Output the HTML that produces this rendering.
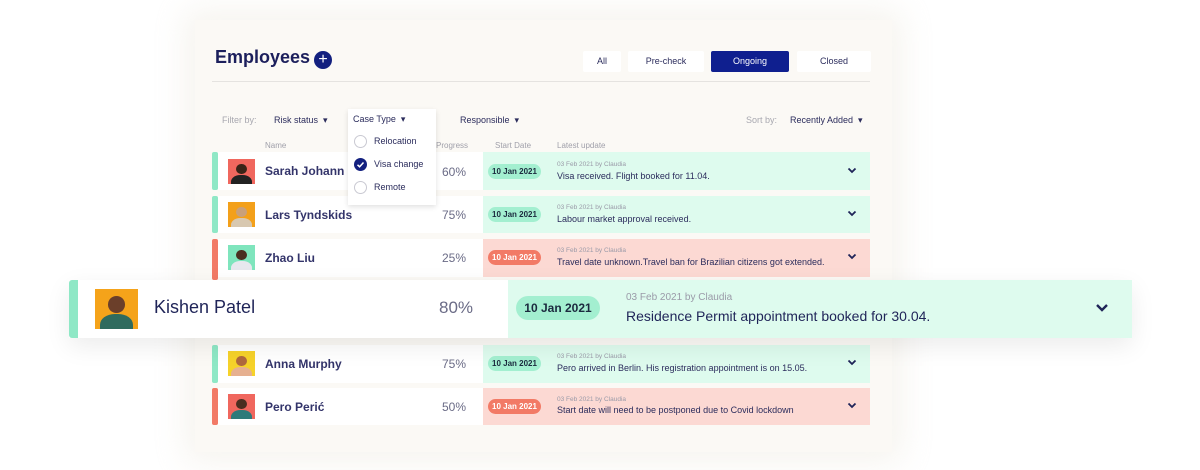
<!DOCTYPE html>
<html><head><meta charset="utf-8"><style>
*{margin:0;padding:0;box-sizing:border-box}
body{width:1200px;height:470px;background:#fff;font-family:"Liberation Sans",sans-serif;color:#2b2c5c;position:relative;overflow:hidden}
.a{position:absolute;white-space:nowrap}
.panel{left:195px;top:20px;width:697px;height:432px;background:#fbf9f5;box-shadow:0 0 30px 10px rgba(240,236,228,.6)}
.tab{top:51px;height:21px;font-size:9px;line-height:21px;text-align:center;background:#fff;border-radius:2px;color:#2b2c5c}
.bar{width:6px;border-radius:2px}
.g{background:#8fe8c6}.r{background:#f27a66}
.white{background:#fff}
.gbg{background:#defbee}.rbg{background:#fcd9d3}
.pill{font-size:8px;font-weight:bold;height:15px;line-height:15px;border-radius:8px;text-align:center;width:53px}
.pg{background:#a3efd0;color:#1b2a3e}.pr{background:#f27a66;color:#fff}
.nm{font-size:12px;font-weight:bold;color:#33346a}
.pc{font-size:12px;color:#6a6b86}
.meta{font-size:6.5px;color:#9a9aa8}
.txt{font-size:9px;color:#2b2c5c}
.av{width:27px;height:25px;overflow:hidden}
.hd{font-size:8px;color:#a0a0aa;top:141px}
.fl{font-size:9px;color:#2b2c5c;top:115px}
svg.ch{position:absolute}
.hd2{position:absolute;left:30%;top:18%;width:40%;height:42%;border-radius:50%;background:#6b3f2a}
.bd{position:absolute;left:12%;top:62%;width:76%;height:60%;border-radius:45% 45% 0 0;background:#2f6b5e}
</style></head><body>
<div class="a panel"></div>
<div class="a" style="left:215px;top:47px;font-size:18px;font-weight:bold;color:#1c1f5c">Employees</div>
<div class="a" style="left:314px;top:51px;width:18px;height:18px;border-radius:50%;background:#13207f;color:#fff;text-align:center;font-size:16px;line-height:18px">+</div>
<div class="a" style="left:212px;top:81px;width:658px;height:1px;background:#e5e3e0"></div>
<div class="a tab" style="left:583px;width:38px">All</div>
<div class="a tab" style="left:628px;width:76px">Pre-check</div>
<div class="a tab" style="left:711px;width:78px;background:#0f1f8f;color:#fff">Ongoing</div>
<div class="a tab" style="left:797px;width:74px">Closed</div>

<div class="a fl" style="left:222px;color:#a8a8b0">Filter by:</div>
<div class="a fl" style="left:274px">Risk status &nbsp;▾</div>
<div class="a fl" style="left:460px">Responsible &nbsp;▾</div>
<div class="a fl" style="left:746px;color:#a8a8b0">Sort by:</div>
<div class="a fl" style="left:790px">Recently Added &nbsp;▾</div>
<div class="a hd" style="left:265px">Name</div>
<div class="a hd" style="left:436px">Progress</div>
<div class="a hd" style="left:495px">Start Date</div>
<div class="a hd" style="left:557px">Latest update</div>

<!-- rows -->
<div class="a bar g" style="left:212px;top:152px;height:38px"></div>
<div class="a white" style="left:218px;top:152px;width:265px;height:38px"></div>
<div class="a gbg" style="left:483px;top:152px;width:387px;height:38px"></div>
<div class="a av" style="left:228px;top:159px;background:#f0675e"><div class="hd2" style="background:#3a2418"></div><div class="bd" style="background:#222"></div></div>
<div class="a nm" style="left:265px;top:164px">Sarah Johann</div>
<div class="a pc" style="left:442px;top:165px">60%</div>
<div class="a pill pg" style="left:488px;top:164px">10 Jan 2021</div>
<div class="a meta" style="left:557px;top:161px">03 Feb 2021 by Claudia</div>
<div class="a txt" style="left:557px;top:171px">Visa received. Flight booked for 11.04.</div>
<svg class="ch" style="left:847px;top:167px" width="10" height="7" viewBox="0 0 10 7"><path d="M1.5 1.5 5 5 8.5 1.5" fill="none" stroke="#1f2458" stroke-width="1.8"/></svg>

<div class="a bar g" style="left:212px;top:196px;height:37px"></div>
<div class="a white" style="left:218px;top:196px;width:265px;height:37px"></div>
<div class="a gbg" style="left:483px;top:196px;width:387px;height:37px"></div>
<div class="a av" style="left:228px;top:202px;background:#f3a01a"><div class="hd2" style="background:#c9a07a"></div><div class="bd" style="background:#d8c8b0"></div></div>
<div class="a nm" style="left:265px;top:208px">Lars Tyndskids</div>
<div class="a pc" style="left:442px;top:208px">75%</div>
<div class="a pill pg" style="left:488px;top:207px">10 Jan 2021</div>
<div class="a meta" style="left:557px;top:204px">03 Feb 2021 by Claudia</div>
<div class="a txt" style="left:557px;top:214px">Labour market approval received.</div>
<svg class="ch" style="left:847px;top:210px" width="10" height="7" viewBox="0 0 10 7"><path d="M1.5 1.5 5 5 8.5 1.5" fill="none" stroke="#1f2458" stroke-width="1.8"/></svg>

<div class="a bar r" style="left:212px;top:239px;height:41px"></div>
<div class="a white" style="left:218px;top:239px;width:265px;height:38px"></div>
<div class="a rbg" style="left:483px;top:239px;width:387px;height:38px"></div>
<div class="a av" style="left:228px;top:245px;background:#7fe5bd"><div class="hd2" style="background:#4a2e20"></div><div class="bd" style="background:#e8e8ee"></div></div>
<div class="a nm" style="left:265px;top:251px">Zhao Liu</div>
<div class="a pc" style="left:442px;top:251px">25%</div>
<div class="a pill pr" style="left:488px;top:250px">10 Jan 2021</div>
<div class="a meta" style="left:557px;top:247px">03 Feb 2021 by Claudia</div>
<div class="a txt" style="left:557px;top:257px">Travel date unknown.Travel ban for Brazilian citizens got extended.</div>
<svg class="ch" style="left:847px;top:253px" width="10" height="7" viewBox="0 0 10 7"><path d="M1.5 1.5 5 5 8.5 1.5" fill="none" stroke="#1f2458" stroke-width="1.8"/></svg>

<div class="a bar g" style="left:212px;top:345px;height:38px"></div>
<div class="a white" style="left:218px;top:345px;width:265px;height:38px"></div>
<div class="a gbg" style="left:483px;top:345px;width:387px;height:38px"></div>
<div class="a av" style="left:228px;top:351px;background:#f6d22a"><div class="hd2" style="background:#b0683e"></div><div class="bd" style="background:#e6b090"></div></div>
<div class="a nm" style="left:265px;top:357px">Anna Murphy</div>
<div class="a pc" style="left:442px;top:357px">75%</div>
<div class="a pill pg" style="left:488px;top:356px">10 Jan 2021</div>
<div class="a meta" style="left:557px;top:353px">03 Feb 2021 by Claudia</div>
<div class="a txt" style="left:557px;top:363px">Pero arrived in Berlin. His registration appointment is on 15.05.</div>
<svg class="ch" style="left:847px;top:359px" width="10" height="7" viewBox="0 0 10 7"><path d="M1.5 1.5 5 5 8.5 1.5" fill="none" stroke="#1f2458" stroke-width="1.8"/></svg>

<div class="a bar r" style="left:212px;top:388px;height:37px"></div>
<div class="a white" style="left:218px;top:388px;width:265px;height:37px"></div>
<div class="a rbg" style="left:483px;top:388px;width:387px;height:37px"></div>
<div class="a av" style="left:228px;top:394px;background:#f0675e"><div class="hd2" style="background:#4a2e20"></div><div class="bd" style="background:#2f7a7a"></div></div>
<div class="a nm" style="left:265px;top:400px">Pero Perić</div>
<div class="a pc" style="left:442px;top:400px">50%</div>
<div class="a pill pr" style="left:488px;top:399px">10 Jan 2021</div>
<div class="a meta" style="left:557px;top:396px">03 Feb 2021 by Claudia</div>
<div class="a txt" style="left:557px;top:405px">Start date will need to be postponed due to Covid lockdown</div>
<svg class="ch" style="left:847px;top:402px" width="10" height="7" viewBox="0 0 10 7"><path d="M1.5 1.5 5 5 8.5 1.5" fill="none" stroke="#1f2458" stroke-width="1.8"/></svg>

<!-- dropdown -->
<div class="a" style="left:348px;top:109px;width:88px;height:96px;background:#fff;box-shadow:0 2px 5px rgba(0,0,0,.12)"></div>
<div class="a fl" style="left:353px;top:114px">Case Type &nbsp;▾</div>
<div class="a" style="left:354px;top:135px;width:13px;height:13px;border:1px solid #c9c9d2;border-radius:50%"></div>
<div class="a" style="left:374px;top:136px;font-size:9px">Relocation</div>
<div class="a" style="left:354px;top:158px;width:13px;height:13px;background:#13207f;border-radius:50%"></div>
<svg class="ch" style="left:354px;top:158px" width="13" height="13" viewBox="0 0 13 13"><path d="M3.5 6.8 5.6 8.8 9.5 4.5" fill="none" stroke="#fff" stroke-width="1.5"/></svg>
<div class="a" style="left:374px;top:159px;font-size:9px">Visa change</div>
<div class="a" style="left:354px;top:181px;width:13px;height:13px;border:1px solid #c9c9d2;border-radius:50%"></div>
<div class="a" style="left:374px;top:182px;font-size:9px">Remote</div>

<!-- big row -->
<div class="a" style="left:69px;top:280px;width:1063px;height:58px;box-shadow:0 8px 25px rgba(0,0,0,.08)"></div>
<div class="a g" style="left:69px;top:280px;width:9px;height:58px;border-radius:3px 0 0 3px"></div>
<div class="a white" style="left:78px;top:280px;width:430px;height:58px"></div>
<div class="a gbg" style="left:508px;top:280px;width:624px;height:58px"></div>
<div class="a av" style="left:95px;top:289px;width:43px;height:40px;background:#f5a31a"><div class="hd2" style="background:#6b3f2a"></div><div class="bd"></div></div>
<div class="a" style="left:154px;top:297px;font-size:18px;color:#1f2458">Kishen Patel</div>
<div class="a" style="left:439px;top:298px;font-size:17px;color:#6a6b86">80%</div>
<div class="a pill pg" style="left:516px;top:296px;width:84px;height:24px;line-height:24px;border-radius:12px;font-size:12px">10 Jan 2021</div>
<div class="a" style="left:626px;top:292px;font-size:10px;color:#9a9aa8">03 Feb 2021 by Claudia</div>
<div class="a" style="left:626px;top:308px;font-size:14px;color:#1f2458">Residence Permit appointment booked for 30.04.</div>
<svg class="ch" style="left:1095px;top:303px" width="14" height="10" viewBox="0 0 14 10"><path d="M2 2 7 7 12 2" fill="none" stroke="#1f2458" stroke-width="2.4"/></svg>
</body></html>
